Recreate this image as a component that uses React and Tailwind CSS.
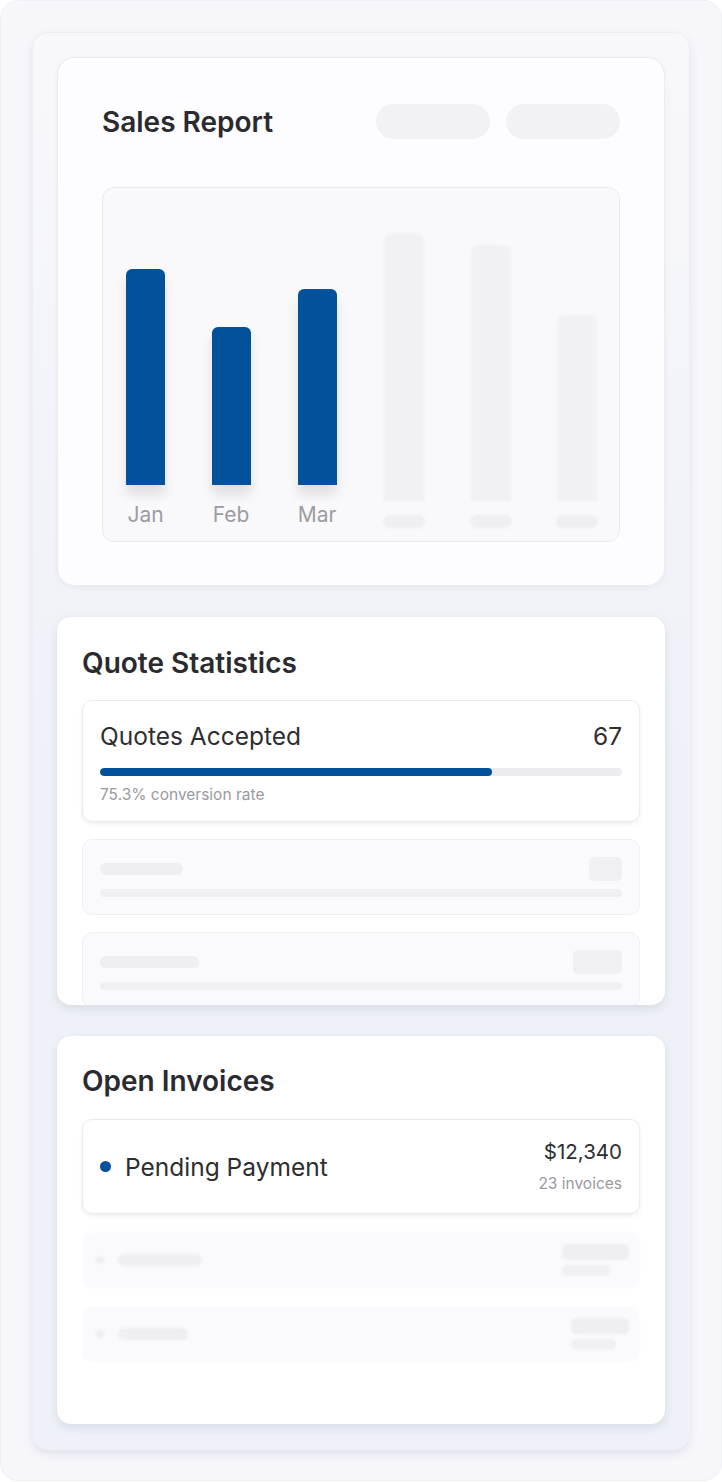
import React from 'react';

const salesBars = [
    { label: 'Jan', height: 216 },
    { label: 'Feb', height: 158 },
    { label: 'Mar', height: 196 },
];

// Faded skeleton bars for the months without data yet
const ghostBars = [268, 256, 186];

const SalesReport = () => (
    <div className="bg-[#fdfcfe] rounded-[18px] border border-[#ecebf1] shadow-[0_2px_6px_rgba(0,0,0,0.04)] px-[44px] pt-[46px] pb-[43px]">
        <div className="flex items-center justify-between">
            <h2 className="text-[28px] leading-[34px] font-semibold text-[#2b2b2f]">Sales Report</h2>
            <div className="flex gap-[16px]">
                <div className="w-[114px] h-[35px] rounded-full bg-[#f2f1f5] blur-[0.5px]" />
                <div className="w-[114px] h-[35px] rounded-full bg-[#f2f1f5] blur-[0.5px]" />
            </div>
        </div>
        <div className="mt-[48px] h-[355px] rounded-[12px] bg-[#f9f8fb] border border-[#ebeaef] grid grid-cols-[85px_86px_86px_87px_87px_1fr] pb-[14px]">
            {salesBars.map(bar => (
                <div key={bar.label} className="flex flex-col items-center justify-end">
                    <div
                        className="w-[39px] rounded-t-[6px] bg-[#02529b] shadow-[0_10px_12px_rgba(0,0,0,0.10)]"
                        style={{ height: bar.height }}
                    />
                    <span className="mt-[18px] text-[21px] leading-[24px] text-[#9d9ca2]">{bar.label}</span>
                </div>
            ))}
            {ghostBars.map((h, i) => (
                <div key={i} className="flex flex-col items-center justify-end blur-[1px]">
                    <div className="w-[40px] rounded-t-[8px] bg-[#f1f0f4]" style={{ height: h }} />
                    <div className="mt-[14px] mb-[-1px] w-[42px] h-[13px] rounded-full bg-[#efeef2]" />
                </div>
            ))}
        </div>
    </div>
);

const SkeletonStat = ({ barWidth, boxWidth }) => (
    <div className="rounded-[10px] bg-[#faf9fc] border border-[#f0eff3] px-[17px] pt-[17px] pb-[17px] shrink-0 blur-[0.6px]">
        <div className="flex items-center justify-between h-[24px]">
            <div className="h-[12px] rounded-full bg-[#efeef2]" style={{ width: barWidth }} />
            <div className="h-[24px] rounded-[5px] bg-[#f0eff3]" style={{ width: boxWidth }} />
        </div>
        <div className="mt-[8px] h-[8px] rounded-full bg-[#f0eff3]" />
    </div>
);

const QuoteStatistics = () => (
    <div className="h-[388px] overflow-hidden bg-white rounded-[14px] shadow-[0_4px_10px_rgba(30,40,70,0.10)] px-[25px] pt-[30px]">
        <h2 className="text-[28px] leading-[32px] font-semibold text-[#2b2b2f]">Quote Statistics</h2>
        <div className="mt-[21px] flex flex-col gap-[17px]">
            <div className="rounded-[10px] bg-white border border-[#ebeaef] shadow-[0_2px_4px_rgba(0,0,0,0.07)] px-[17px] pt-[21px] pb-[16px]">
                <div className="flex items-center justify-between">
                    <span className="text-[24.5px] leading-[28px] text-[#2e2e31]">Quotes Accepted</span>
                    <span className="text-[24.5px] leading-[28px] text-[#2e2e31]">67</span>
                </div>
                <div className="mt-[18px] h-[8px] rounded-full bg-[#ecebef] overflow-hidden">
                    <div className="h-full rounded-full bg-[#02529b]" style={{ width: '75.1%' }} />
                </div>
                <p className="mt-[9px] text-[15.5px] leading-[20px] text-[#9a999f]">75.3% conversion rate</p>
            </div>
            <SkeletonStat barWidth={83} boxWidth={33} />
            <SkeletonStat barWidth={99} boxWidth={49} />
        </div>
    </div>
);

const SkeletonInvoice = ({ barWidth, topWidth, bottomWidth }) => (
    <div className="h-[56px] rounded-[10px] bg-[#faf9fc] flex items-center justify-between pl-[14px] pr-[11px] blur-[1px]">
        <div className="flex items-center gap-[14px]">
            <div className="w-[8px] h-[8px] rounded-full bg-[#efeef2]" />
            <div className="h-[12px] rounded-full bg-[#efeef2]" style={{ width: barWidth }} />
        </div>
        <div className="flex flex-col items-start gap-[5px]">
            <div className="h-[16px] rounded-[5px] bg-[#efeef2]" style={{ width: topWidth }} />
            <div className="h-[11px] rounded-[5px] bg-[#f0eff3]" style={{ width: bottomWidth }} />
        </div>
    </div>
);

const OpenInvoices = () => (
    <div className="h-[388px] overflow-hidden bg-white rounded-[14px] shadow-[0_4px_10px_rgba(30,40,70,0.10)] px-[25px] pt-[29px]">
        <h2 className="text-[28px] leading-[32px] font-semibold text-[#2b2b2f]">Open Invoices</h2>
        <div className="mt-[22px] flex flex-col gap-[18px]">
            <div className="rounded-[10px] bg-white border border-[#ebeaef] shadow-[0_2px_4px_rgba(0,0,0,0.07)] pl-[17px] pr-[17px] py-[19px] flex items-center justify-between">
                <div className="flex items-center gap-[14px]">
                    <span className="w-[11px] h-[11px] rounded-full bg-[#02529b]" />
                    <span className="text-[24.5px] leading-[28px] text-[#2e2e31]">Pending Payment</span>
                </div>
                <div className="flex flex-col items-end">
                    <span className="text-[20.5px] leading-[26px] text-[#2e2e31]">$12,340</span>
                    <span className="mt-[9px] text-[15.5px] leading-[20px] text-[#9a999f]">23 invoices</span>
                </div>
            </div>
            <SkeletonInvoice barWidth={84} topWidth={67} bottomWidth={49} />
            <SkeletonInvoice barWidth={70} topWidth={58} bottomWidth={45} />
        </div>
    </div>
);

const App = () => {
    return (
        <div className="w-[722px] h-[1482px] bg-white font-['Inter','Liberation_Sans',sans-serif]">
            <div className="h-[1481px] rounded-[18px] bg-[#f7f7fb] border border-[#eeeff5] p-[31px]">
                <div className="h-[1418px] rounded-[16px] bg-gradient-to-b from-[#f8f8fb] via-[#eff1f8] to-[#eef1f8] shadow-[0_4px_10px_rgba(30,40,80,0.10)] border border-[#eceef5] px-[24px] pt-[24px] flex flex-col gap-[31px]">
                    <SalesReport />
                    <QuoteStatistics />
                    <OpenInvoices />
                </div>
            </div>
        </div>
    );
};

export default App;
